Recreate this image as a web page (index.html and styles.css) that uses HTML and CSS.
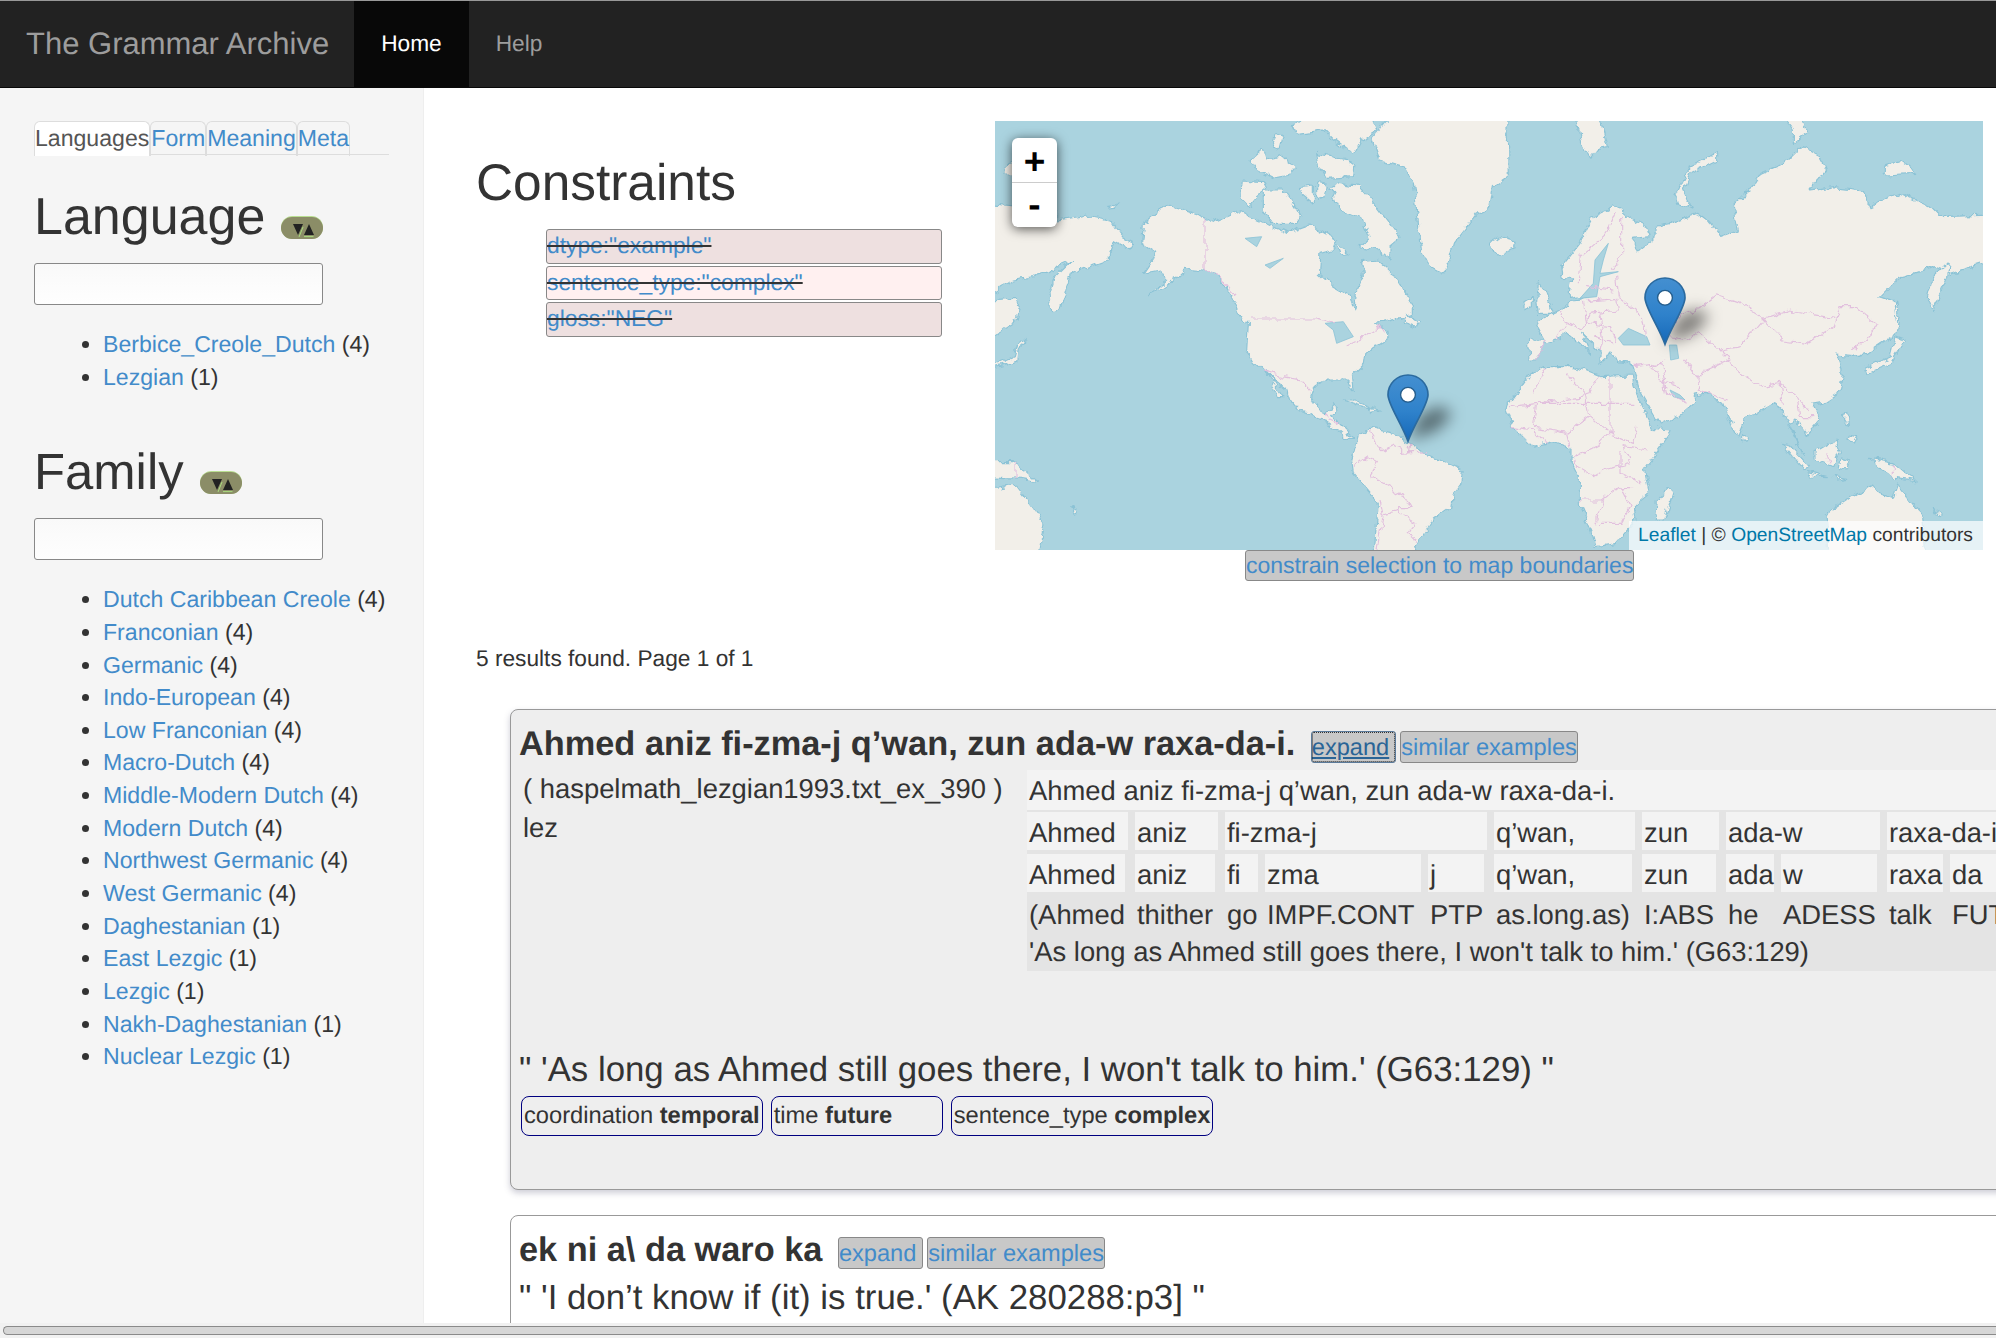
FILE: index.html
```html
<!DOCTYPE html>
<html lang="en">
<head>
<meta charset="utf-8">
<title>The Grammar Archive</title>
<link rel="stylesheet" href="styles.css">
</head>
<body>
<svg class="defs" width="0" height="0" aria-hidden="true">
  <defs>
    <linearGradient id="pinFill" x1="0" y1="0" x2="0" y2="1">
      <stop offset="0" stop-color="#448fd0"/>
      <stop offset="0.55" stop-color="#2f82cb"/>
      <stop offset="1" stop-color="#1668b8"/>
    </linearGradient>
    <filter id="pinBlur" x="-100%" y="-100%" width="300%" height="300%"><feGaussianBlur stdDeviation="4.5"/></filter>
    <filter id="coast" x="-2%" y="-2%" width="104%" height="104%">
      <feTurbulence type="fractalNoise" baseFrequency=".035" numOctaves="3" seed="7" result="n"/>
      <feDisplacementMap in="SourceGraphic" in2="n" scale="26" xChannelSelector="R" yChannelSelector="G"/>
    </filter>
    <symbol id="pin" viewBox="0 0 42 68" overflow="visible">
      <g transform="scale(1.68 1.66)">
        <polygon points="13,40 19,25 31,19 39,24 30,34" fill="#000" fill-opacity=".48" filter="url(#pinBlur)"/>
        <path d="M12.5.6C5.9.6.6 5.9.6 12.5c0 6 8 17 11.9 28 3.9-11 11.9-22 11.9-28C24.4 5.9 19.1.6 12.5.6z" fill="url(#pinFill)" stroke="#2b6a9f" stroke-width="1"/>
        <circle cx="12.5" cy="12.5" r="4.4" fill="#fff" stroke="#245d8c" stroke-width=".8"/>
      </g>
    </symbol>
    <symbol id="sorter" viewBox="0 0 42 23">
      <rect x="0" y="0" width="42" height="23" rx="11.5" fill="#b9de90"/>
      <rect x="0" y="1" width="42" height="22" rx="11" fill="#8b8d67"/>
      <path d="M12 8h10l-5 11z" fill="#222"/>
      <path d="M23 19h10l-5-11z" fill="#222"/>
      <path d="M18 21l4-10M23 20.6h9.5" stroke="#a9dc7e" stroke-width="1" fill="none"/>
    </symbol>
  </defs>
</svg>

<nav class="navbar">
  <a class="brand" href="#">The Grammar Archive</a>
  <a class="nav-item active" href="#">Home</a>
  <a class="nav-item" href="#">Help</a>
</nav>

<div class="page">
  <aside class="sidebar">
    <ul class="tabs">
      <li class="tab active"><a href="#">Languages</a></li>
      <li class="tab"><a href="#">Form</a></li>
      <li class="tab"><a href="#">Meaning</a></li>
      <li class="tab"><a href="#">Meta</a></li>
    </ul>

    <section class="facet">
      <div class="facet-head">
        <h2>Language</h2>
        <svg class="sorter"><use href="#sorter"/></svg>
      </div>
      <input class="facet-input" type="text" aria-label="Language">
      <ul class="facet-list">
        <li><a href="#">Berbice_Creole_Dutch</a> (4)</li>
        <li><a href="#">Lezgian</a> (1)</li>
      </ul>
    </section>

    <section class="facet family">
      <div class="facet-head">
        <h2>Family</h2>
        <svg class="sorter"><use href="#sorter"/></svg>
      </div>
      <input class="facet-input" type="text" aria-label="Family">
      <ul class="facet-list">
        <li><a href="#">Dutch Caribbean Creole</a> (4)</li>
        <li><a href="#">Franconian</a> (4)</li>
        <li><a href="#">Germanic</a> (4)</li>
        <li><a href="#">Indo-European</a> (4)</li>
        <li><a href="#">Low Franconian</a> (4)</li>
        <li><a href="#">Macro-Dutch</a> (4)</li>
        <li><a href="#">Middle-Modern Dutch</a> (4)</li>
        <li><a href="#">Modern Dutch</a> (4)</li>
        <li><a href="#">Northwest Germanic</a> (4)</li>
        <li><a href="#">West Germanic</a> (4)</li>
        <li><a href="#">Daghestanian</a> (1)</li>
        <li><a href="#">East Lezgic</a> (1)</li>
        <li><a href="#">Lezgic</a> (1)</li>
        <li><a href="#">Nakh-Daghestanian</a> (1)</li>
        <li><a href="#">Nuclear Lezgic</a> (1)</li>
      </ul>
    </section>
  </aside>

  <main class="content">
    <div class="top">
      <section class="constraints">
        <h2>Constraints</h2>
        <div class="constraint-list">
          <div class="constraint odd"><a href="#">dtype:"example"</a></div>
          <div class="constraint even"><a href="#">sentence_type:"complex"</a></div>
          <div class="constraint odd"><a href="#">gloss:"NEG"</a></div>
        </div>
      </section>

      <section class="map-col">
        <div class="map">
          <svg class="tiles" viewBox="-15 33 2964 1287" preserveAspectRatio="none" aria-hidden="true">
            <g class="land">
              <!-- far east Russia, wrapped to the left edge -->
              <polygon points="-40,280 170,300 170,330 240,320 260,315 330,330 370,380 400,395 385,420 340,395 325,430 325,450 270,470 215,490 200,530 180,600 155,605 150,550 165,500 215,450 180,465 140,490 105,500 40,510 -40,560"/>
              <polygon points="-40,570 45,565 60,600 55,630 -40,690"/>
              <polygon points="-40,775 40,740 50,705 75,685 80,695 55,715 50,755 -40,780"/>
              <polygon points="320,290 350,285 345,295 325,297"/>
              <polygon points="15,165 35,160 35,195 15,195"/>
              <!-- North America -->
              <polygon points="430,340 505,285 615,322 650,335 720,305 810,345 860,370 930,345 1010,390 1000,420 960,430 955,490 1000,530 1050,560 1065,600 1070,540 1090,490 1085,455 1130,450 1165,480 1175,490 1240,590 1240,610 1200,625 1130,640 1160,665 1165,685 1095,730 1090,765 1055,800 1060,850 1040,810 985,810 945,830 935,860 950,880 975,915 1005,880 1008,905 995,920 1020,945 1060,985 1040,985 1000,950 960,925 900,905 870,870 860,840 790,785 760,755 740,720 745,640 715,610 695,560 650,490 610,480 560,475 530,505 445,560 500,510 480,480 430,490 470,430 425,400"/>
              <polygon points="800,785 850,860 835,860 810,810"/>
              <polygon points="990,235 1020,220 1080,230 1130,290 1190,370 1200,385 1170,410 1170,450 1130,420 1080,410 1110,380 1090,330 1040,310 1010,280"/>
              <polygon points="790,240 850,240 880,280 905,320 890,340 820,340 790,300"/>
              <polygon points="730,210 790,215 800,235 770,260 745,290 725,270"/>
              <polygon points="870,50 950,10 1110,10 1130,60 1080,90 1060,130 1040,120 1000,90 970,60 900,70"/>
              <polygon points="950,130 1040,150 1065,170 1060,200 980,205 960,170"/>
              <polygon points="750,150 790,115 800,150 850,140 890,170 870,195 820,205 770,180"/>
              <polygon points="900,230 940,225 940,280 905,250"/>
              <polygon points="950,220 985,225 975,260 950,265"/>
              <polygon points="830,70 850,80 840,120 815,110"/>
              <polygon points="1010,410 1050,430 1020,435"/>
              <polygon points="1220,610 1260,640 1250,655 1215,640"/>
              <polygon points="1030,870 1060,870 1120,895 1090,890"/>
              <polygon points="1105,895 1145,900 1110,908"/>
              <!-- Greenland, Iceland, Svalbard, Arctic islands -->
              <polygon points="1115,85 1175,10 1520,10 1525,200 1480,230 1470,290 1430,310 1360,400 1340,475 1325,490 1290,470 1265,420 1255,340 1240,220 1210,170 1140,150"/>
              <polygon points="1470,395 1500,383 1545,395 1545,420 1500,435 1475,420"/>
              <polygon points="1725,10 1800,10 1825,110 1795,115 1770,145 1745,100"/>
              <polygon points="2330,10 2400,10 2420,70 2380,100 2380,60 2360,35"/>
              <polygon points="2650,170 2700,155 2750,190 2650,195"/>
              <polygon points="2150,130 2150,150 2070,190 2050,240 2075,300 2030,280 2025,260 2045,220 2070,170"/>
              <!-- Eurasia -->
              <polygon points="1585,690 1635,690 1610,645 1615,630 1680,600 1715,570 1760,565 1730,555 1705,560 1715,510 1690,505 1685,470 1740,400 1780,320 1845,290 1880,320 1940,350 1950,380 1900,385 1915,425 1965,385 1965,350 2010,340 2090,310 2130,340 2160,380 2215,360 2200,290 2250,240 2280,190 2360,155 2405,110 2460,140 2480,175 2430,240 2500,230 2590,240 2610,290 2700,250 2790,290 2820,320 2980,315 2980,450 2850,490 2800,470 2740,490 2700,500 2640,560 2685,575 2700,630 2690,670 2600,730 2560,740 2510,735 2530,790 2520,845 2468,880 2438,885 2463,930 2423,975 2388,930 2368,940 2408,1030 2368,950 2348,900 2318,880 2233,930 2213,980 2188,930 2168,880 2118,850 2083,855 2083,880 2048,910 1978,945 1918,840 1905,790 1895,760 1850,755 1835,720 1820,745 1800,760 1800,720 1745,670 1770,730 1740,700 1705,670 1670,690 1630,700 1610,750 1590,750"/>
              <polygon points="1615,515 1635,540 1660,610 1615,610 1610,570"/>
              <polygon points="1575,575 1600,560 1600,590 1575,600"/>
              <polygon points="2845,455 2840,500 2800,605 2785,560 2800,500"/>
              <polygon points="2685,680 2715,690 2670,760 2600,790 2595,775 2670,740"/>
              <polygon points="2690,570 2700,630 2690,640 2685,600"/>
              <!-- Africa, Madagascar -->
              <polygon points="1897,795 1800,800 1725,770 1630,770 1590,790 1540,860 1525,880 1518,900 1538,950 1598,1010 1658,995 1713,1015 1713,1050 1738,1100 1738,1180 1773,1260 1788,1310 1848,1300 1908,1230 1903,1190 1948,1150 1933,1080 2018,960 1958,955 1903,840"/>
              <polygon points="2008,1130 2018,1150 1993,1230 1966,1230 1973,1160"/>
              <!-- South East Asia -->
              <polygon points="2228,975 2243,985 2238,1000 2228,995"/>
              <polygon points="2508,990 2518,1025 2498,1070 2448,1050 2448,1025"/>
              <polygon points="2348,1000 2368,1005 2428,1070 2413,1080"/>
              <polygon points="2423,1085 2488,1100 2428,1098"/>
              <polygon points="2500,1100 2540,1105 2510,1110"/>
              <polygon points="2523,1040 2548,1050 2538,1080 2518,1075"/>
              <polygon points="2528,910 2543,905 2548,945 2528,940"/>
              <polygon points="2548,975 2573,980 2563,1000 2543,990"/>
              <polygon points="2608,1045 2683,1060 2748,1115 2688,1105 2638,1070"/>
              <polygon points="-40,1055 40,1055 115,1115 60,1105 -40,1100"/>
              <!-- Australia, both sides of the wrap -->
              <polygon points="2478,1210 2568,1150 2618,1125 2638,1150 2678,1165 2693,1125 2768,1220 2778,1350 2488,1350"/>
              <polygon points="-40,1140 50,1125 135,1240 115,1350 -40,1350"/>
              <polygon points="2800,1195 2830,1215 2820,1220"/>
              <polygon points="215,1190 235,1205 225,1210"/>
              <!-- South America -->
              <polygon points="1075,975 1115,955 1180,970 1230,1000 1280,1035 1340,1060 1390,1085 1385,1120 1360,1150 1355,1190 1300,1230 1280,1260 1245,1310 1240,1350 1120,1350 1135,1180 1060,1090 1055,1050"/>
            </g>
            <g class="water">
              <polygon points="1855,685 1885,655 1940,680 1950,705 1870,705"/>
              <polygon points="2008,705 2030,705 2036,745 2012,750"/>
              <polygon points="1825,400 1785,450 1780,520 1740,565 1790,560 1800,500 1855,485 1800,490 1810,450"/>
              <polygon points="2010,840 2040,855 2055,870 2020,860"/>
              <polygon points="975,640 1030,635 1060,680 1010,700 1000,660"/>
              <polygon points="735,385 785,380 770,410"/>
              <polygon points="795,465 850,445 810,475"/>
            </g>
            <g class="borders">
              <polyline points="750,627 950,627 1000,640"/>
              <polyline points="1040,705 1090,680 1140,650 1150,665"/>
              <polyline points="615,322 615,480 655,495 700,550"/>
              <polyline points="790,785 850,800 900,810 935,845"/>
              <polyline points="975,915 990,930 1020,945"/>
              <!-- South America -->
              <polyline points="1115,960 1130,1010 1150,1025 1180,1005 1205,1015 1205,1030 1280,1025"/>
              <polyline points="1230,1000 1225,1030"/>
              <polyline points="1060,1070 1100,1040 1135,1060 1110,1100 1150,1120 1210,1155 1230,1190 1190,1190 1190,1205 1150,1215 1140,1170"/>
              <polyline points="1190,1205 1250,1240 1225,1270 1255,1295"/>
              <polyline points="1150,1215 1130,1320"/>
              <polyline points="45,1060 45,1105"/>
              <!-- Europe -->
              <polyline points="1845,310 1820,370 1740,440 1735,520"/>
              <polyline points="1865,320 1865,440 1835,480"/>
              <polyline points="1850,500 1855,560 1930,620 1940,680"/>
              <polyline points="1680,600 1700,640 1670,690"/>
              <polyline points="1750,570 1760,640 1745,660 1700,640"/>
              <polyline points="1760,575 1850,565 1855,600 1770,610 1760,640 1830,650 1850,690"/>
              <polyline points="1800,610 1810,690 1800,720"/>
              <polyline points="1840,540 1760,530"/>
              <polyline points="1635,690 1610,750"/>
              <polyline points="1780,680 1840,700"/>
              <!-- Central Asia, China -->
              <polyline points="2090,600 2150,555 2220,580 2290,625 2350,690 2420,700 2500,650 2520,590 2570,590 2630,640 2600,690 2560,720"/>
              <polyline points="2290,625 2370,600 2500,625"/>
              <polyline points="2090,600 2040,620 1990,680 2050,690 2100,670 2160,720 2220,710 2290,625"/>
              <polyline points="2160,720 2190,750 2120,780 2090,800 2100,840 2180,870"/>
              <polyline points="2050,745 2090,800"/>
              <polyline points="1995,750 1960,770 1990,820 2040,830"/>
              <polyline points="2180,750 2240,800 2290,830 2340,820 2390,860 2420,900"/>
              <polyline points="2340,820 2350,880"/>
              <polyline points="2390,860 2400,920 2440,920"/>
              <polyline points="1900,770 1985,760 1990,790 2000,850 2060,880"/>
              <!-- Africa -->
              <polyline points="1900,880 1610,880"/>
              <polyline points="1800,800 1760,860 1610,880 1530,890"/>
              <polyline points="1640,770 1600,850"/>
              <polyline points="1700,790 1760,860 1770,920 1700,970 1710,1010"/>
              <polyline points="1830,800 1830,880 1830,970 1900,1000 1915,950"/>
              <polyline points="1830,970 1770,920"/>
              <polyline points="1610,880 1600,950 1650,960 1700,970"/>
              <polyline points="1830,970 1800,1000 1720,1040 1730,1070 1780,1100 1815,1080 1890,1060 1870,1010 1940,1020"/>
              <polyline points="1860,1020 1860,1090 1930,1120"/>
              <polyline points="1740,1170 1810,1170 1860,1130 1900,1130"/>
              <polyline points="1810,1170 1790,1240"/>
              <polyline points="1860,1130 1890,1190 1860,1240 1800,1240"/>
              <polyline points="1538,950 1600,960 1640,1000"/>
              <polyline points="2680,1060 2680,1105"/>
              <polyline points="2480,1030 2490,1060"/>
            </g>
          </svg>
          <div class="zoom">
            <a href="#">+</a>
            <a href="#">-</a>
          </div>
          <svg class="pin pin-west" aria-hidden="true"><use href="#pin"/></svg>
          <svg class="pin pin-east" aria-hidden="true"><use href="#pin"/></svg>
          <div class="attribution"><a href="#">Leaflet</a> | © <a href="#">OpenStreetMap</a> contributors</div>
        </div>
        <a class="btn map-btn" href="#">constrain selection to map boundaries</a>
      </section>
    </div>

    <p class="results">5 results found. Page 1 of 1</p>

    <article class="card shaded">
      <header class="card-head">
        <h3>Ahmed aniz fi-zma-j q’wan, zun ada-w raxa-da-i.</h3>
        <a class="btn expand focused" href="#">expand</a>
        <a class="btn" href="#">similar examples</a>
      </header>
      <div class="card-body">
        <div class="meta">
          <div>( haspelmath_lezgian1993.txt_ex_390 )</div>
          <div>lez</div>
        </div>
        <div class="gloss">
          <div class="line src">Ahmed aniz fi-zma-j q’wan, zun ada-w raxa-da-i.</div>

          <div class="w">Ahmed</div>
          <div class="w">aniz</div>
          <div class="w s3">fi-zma-j</div>
          <div class="w">q’wan,</div>
          <div class="w">zun</div>
          <div class="w s2">ada-w</div>
          <div class="w s3 open">raxa-da-i</div>

          <div class="m">Ahmed</div>
          <div class="m">aniz</div>
          <div class="m in">fi</div>
          <div class="m in">zma</div>
          <div class="m">j</div>
          <div class="m">q’wan,</div>
          <div class="m">zun</div>
          <div class="m in">ada</div>
          <div class="m">w</div>
          <div class="m in">raxa</div>
          <div class="m s2 open">da</div>

          <div class="g">(Ahmed</div>
          <div class="g">thither</div>
          <div class="g">go</div>
          <div class="g">IMPF.CONT</div>
          <div class="g">PTP</div>
          <div class="g">as.long.as)</div>
          <div class="g">I:ABS</div>
          <div class="g">he</div>
          <div class="g">ADESS</div>
          <div class="g">talk</div>
          <div class="g s2">FUT</div>

          <div class="line tr">'As long as Ahmed still goes there, I won't talk to him.' (G63:129)</div>
        </div>
      </div>
      <p class="quote first">" 'As long as Ahmed still goes there, I won't talk to him.' (G63:129) "</p>
      <div class="tags">
        <span class="tag">coordination <b>temporal</b></span>
        <span class="tag wide">time <b>future</b></span>
        <span class="tag">sentence_type <b>complex</b></span>
      </div>
    </article>

    <article class="card">
      <header class="card-head">
        <h3>ek ni a\ da waro ka</h3>
        <a class="btn expand" href="#">expand</a>
        <a class="btn" href="#">similar examples</a>
      </header>
      <p class="quote">" 'I don’t know if (it) is true.' (AK 280288:p3] "</p>
    </article>
  </main>
</div>

<div class="hscroll"><div class="hscroll-thumb"></div></div>
</body>
</html>
```

FILE: styles.css
```css
* { box-sizing: border-box; }

html, body { height: 100%; }

body {
  margin: 0;
  height: 100vh;
  display: flex;
  flex-direction: column;
  overflow: hidden;
  font-family: "Liberation Sans", Arial, sans-serif;
  font-size: 23.1px;
  line-height: 32.64px;
  color: #333;
  background: #fff;
  text-rendering: geometricPrecision;
}

a { color: #428bca; text-decoration: none; }

h2 {
  margin: 0;
  font-size: 51.4px;
  line-height: 56px;
  font-weight: 400;
}

.defs { position: absolute; }

/* navbar */
.navbar {
  flex: none;
  height: 88px;
  display: flex;
  background: #222;
  border-top: 1px solid #999;
  border-bottom: 1px solid #080808;
}

.brand {
  padding: 0 25px 0 26px;
  font-size: 31px;
  line-height: 85px;
  color: #9d9d9d;
}

.nav-item {
  padding: 0 27px;
  font-size: 22.7px;
  line-height: 85px;
  color: #9d9d9d;
}

.nav-item.active {
  background: #080808;
  color: #fff;
}

/* page */
.page {
  flex: 1;
  min-height: 0;
  display: flex;
}

.sidebar {
  flex: none;
  width: 424px;
  padding: 33px 0 0 34px;
  background: #f5f5f5;
  border-right: 1px solid #eee;
}

.tabs {
  width: 355px;
  height: 34px;
  margin: 0 0 34px;
  padding: 0;
  list-style: none;
  display: flex;
  border-bottom: 1px solid #ddd;
}

.tab {
  height: 35px;
  line-height: 32px;
  border: 1px solid #ddd;
  border-bottom: 0;
  border-radius: 6px 6px 0 0;
}

.tab.active { background: #fff; }
.tab.active a { color: #555; }

.facet-head {
  display: flex;
  gap: 16px;
}

.facet-head h2 { font-size: 52px; }
.family .facet-head h2 { font-size: 50.8px; }

.sorter {
  flex: none;
  width: 42px;
  height: 23px;
  margin-top: 27px;
}

.facet-input {
  display: block;
  width: 289px;
  height: 42px;
  margin: 18px 0 23px;
  border: 1px solid #888;
  border-radius: 3px;
  background: linear-gradient(#f9f9f9, #fefefe);
}

.facet-list {
  margin: 0;
  padding-left: 69px;
}

.family { margin-top: 51px; }

/* content */
.content {
  flex: 1;
  min-width: 0;
  overflow: hidden;
  padding: 33px 0 0 52px;
}

.top { display: flex; }

.constraints {
  flex: none;
  width: 519px;
  padding-top: 33px;
}

.constraint-list {
  margin: 19px 0 0 70px;
  width: 396px;
}

.constraint {
  height: 34.5px;
  margin-bottom: 2px;
  border: 1px solid #888;
  border-radius: 3px;
  font-size: 22.8px;
  line-height: 31px;
  text-decoration: line-through;
  text-decoration-color: #333;
}

.constraint.odd { background: #eee0e0; }
.constraint.even { background: #fff0f0; }

.map-col { flex: none; width: 988px; }

.map {
  position: relative;
  height: 429px;
  overflow: hidden;
  background: #aad3df;
}

.tiles {
  display: block;
  width: 100%;
  height: 100%;
  filter: blur(.35px);
}

.land { filter: url(#coast); }

.land polygon {
  fill: #f2efe9;
  stroke: #8cc3d6;
  stroke-width: 3.5;
  stroke-linejoin: round;
}

.water polygon {
  fill: #aad3df;
  stroke: #8cc3d6;
  stroke-width: 2.5;
  stroke-linejoin: round;
}

.borders { filter: url(#coast); }

.borders polyline {
  fill: none;
  stroke: #e2c0de;
  stroke-width: 3.5;
}

.zoom {
  position: absolute;
  left: 17px;
  top: 17px;
  width: 45px;
  height: 89px;
  background: #fff;
  border-radius: 6px;
  box-shadow: 0 2px 12px rgba(0, 0, 0, .65);
}

.zoom a {
  display: block;
  height: 44.5px;
  text-align: center;
  font-weight: 700;
  font-size: 37px;
  line-height: 44px;
  color: #000;
}

.zoom a:first-child {
  border-bottom: 1px solid #ccc;
  line-height: 47px;
}

.pin {
  position: absolute;
  width: 42px;
  height: 68px;
  overflow: visible;
}

.pin-west { left: 392px; top: 253px; }
.pin-east { left: 649px; top: 156px; }

.attribution {
  position: absolute;
  right: 0;
  bottom: 0;
  height: 29px;
  padding: 0 10px 0 9px;
  background: rgba(255, 255, 255, .7);
  font-size: 19.25px;
  line-height: 29px;
}

.attribution a { color: #0078a8; }

.btn {
  flex: none;
  display: inline-block;
  height: 32px;
  border: 1px solid #888;
  border-radius: 3px;
  background: #c8c8c8;
  font-size: 23.6px;
  line-height: 32px;
  white-space: nowrap;
}

.btn.expand { padding-right: 6px; }

.map-btn {
  display: block;
  width: fit-content;
  margin-left: 250px;
  height: 31px;
  font-size: 23px;
  line-height: 28px;
}

.results {
  margin: 61px 0 34px;
  font-size: 22.7px;
  line-height: 33px;
}

/* example cards */
.card {
  width: 1700px;
  min-height: 160px;
  margin: 0 0 25px 34px;
  padding: 15px 0 0 8px;
  border: 1px solid #999;
  border-radius: 8px;
}

.card.shaded {
  height: 481px;
  background: #eee;
  box-shadow: 0 3px 6px rgba(90, 90, 120, .3);
}

.card-head {
  display: flex;
  align-items: flex-start;
  gap: 4px;
  height: 45px;
}

.card-head .btn { margin-top: 6px; }

.card-head h3 {
  margin: 0 11.5px 0 0;
  font-size: 34.35px;
  line-height: 38px;
  font-weight: 700;
  white-space: nowrap;
}

.btn.focused {
  color: #2a6496;
  text-decoration: underline;
  outline: 1px dotted #333;
  outline-offset: -2px;
  border-color: #5a7a9a;
}

.card-body { display: flex; }

.meta {
  flex: none;
  width: 508px;
  margin-top: -1px;
  padding-left: 4px;
  font-size: 27.4px;
  line-height: 39px;
  white-space: nowrap;
}

.gloss {
  flex: none;
  width: 1160px;
  display: grid;
  grid-template-columns: 108px 90px 40px 163px 66px 148px 84px 55px 106px 63px 100px 1fr;
  background: #e4e4e4;
  font-size: 27.4px;
  line-height: 41px;
  white-space: nowrap;
}

.gloss > div { padding-left: 2px; }

.line { grid-column: 1 / -1; }

.src {
  height: 40px;
  margin-bottom: 2px;
  line-height: 41px;
  background: #f3f3f3;
}

.w, .m { height: 38px; background: #f3f3f3; }
.w { margin: 0 7px 4px 0; }
.m { margin-right: 10px; }
.m.in { margin-right: 7px; }
.open, .m.open { margin-right: 0; }

.g { height: 40px; line-height: 46px; }
.tr { height: 39px; line-height: 40px; }

.s2 { grid-column: span 2; }
.s3 { grid-column: span 3; }

.quote {
  margin: 2px 0 0;
  font-size: 34.8px;
  line-height: 40px;
  white-space: nowrap;
}

.quote.first { margin-top: 79px; }

.tags {
  display: flex;
  gap: 8px;
  margin: 6px 0 0 2px;
}

.tag {
  height: 40px;
  padding: 0 2px;
  border: 1px solid #000080;
  border-radius: 8px;
  font-size: 23.7px;
  line-height: 38px;
  white-space: nowrap;
}

.tag.wide { width: 172px; }

/* page-level scrollbar */
.hscroll {
  flex: none;
  height: 15px;
  padding: 3px 0 0 3px;
  background: #f1f1f1;
}

.hscroll-thumb {
  height: 9px;
  background: #d6d6d6;
  border-top: 1px solid #8a8a8a;
  border-bottom: 1px solid #8a8a8a;
  border-left: 1px solid #8a8a8a;
  border-radius: 5px 0 0 5px;
}
```
